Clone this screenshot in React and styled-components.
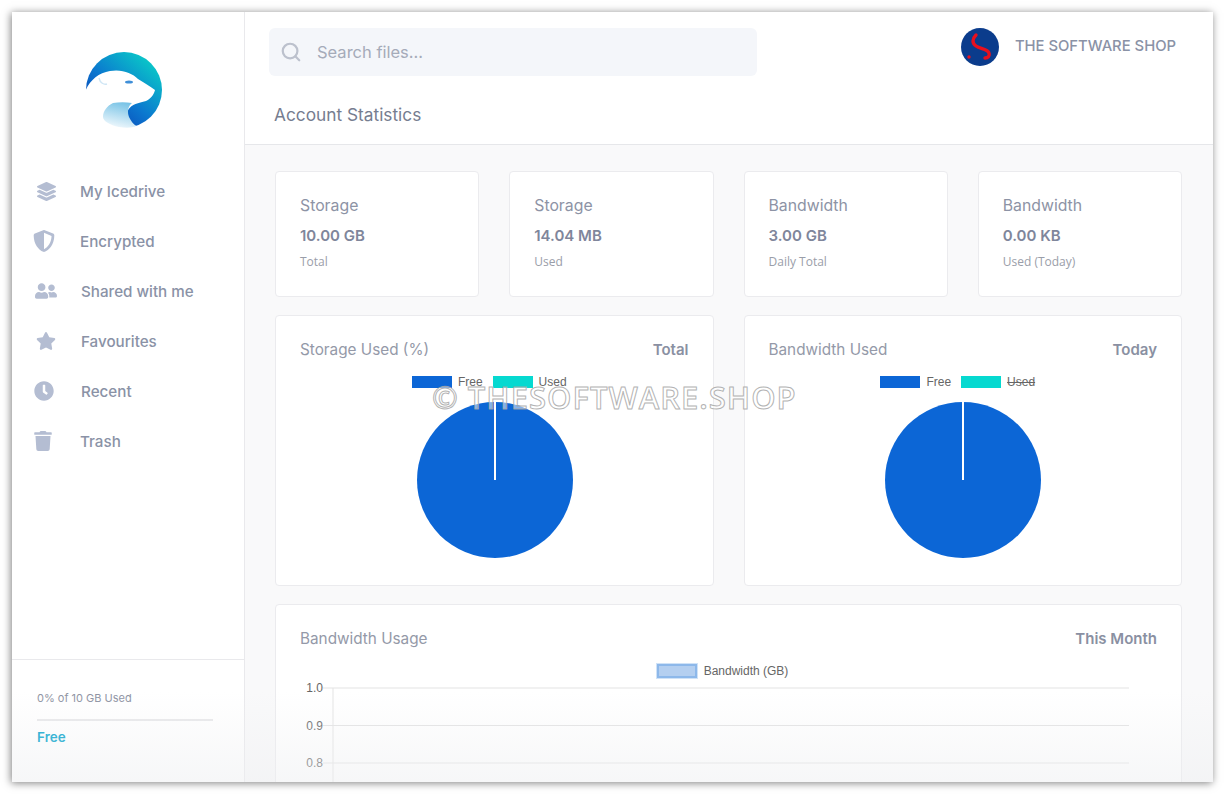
import React from 'react';
import styled, { createGlobalStyle } from 'styled-components';
import { FaLayerGroup, FaShieldAlt, FaUserFriends, FaStar, FaClock, FaTrash } from 'react-icons/fa';
import { Search } from 'lucide-react';

const NAV_ITEMS = [
	{ label: 'My Icedrive', icon: FaLayerGroup, size: 19, iconLeft: 4, textLeft: 0 },
	{ label: 'Encrypted', icon: FaShieldAlt, size: 22, iconLeft: 0, textLeft: 0 },
	{ label: 'Shared with me', icon: FaUserFriends, size: 22, iconLeft: 2, textLeft: 1 },
	{ label: 'Favourites', icon: FaStar, size: 20, iconLeft: 3, textLeft: 1 },
	{ label: 'Recent', icon: FaClock, size: 20, iconLeft: 1, textLeft: 1 },
	{ label: 'Trash', icon: FaTrash, size: 20, iconLeft: 0, textLeft: 0 },
];

const STATS = [
	{ title: 'Storage', value: '10.00 GB', note: 'Total' },
	{ title: 'Storage', value: '14.04 MB', note: 'Used' },
	{ title: 'Bandwidth', value: '3.00 GB', note: 'Daily Total' },
	{ title: 'Bandwidth', value: '0.00 KB', note: 'Used (Today)' },
];

const PIES = [
	{ title: 'Storage Used (%)', period: 'Total', usedHidden: false },
	{ title: 'Bandwidth Used', period: 'Today', usedHidden: true },
];

const TICKS = [
	{ label: '1.0', y: 10 },
	{ label: '0.9', y: 47.5 },
	{ label: '0.8', y: 85 },
];

const Logo = () => (
	<svg width="76" height="76" viewBox="0 0 76 76">
		<defs>
			<linearGradient id="logoBlue" x1="0.15" y1="0.9" x2="0.85" y2="0.1">
				<stop offset="0" stopColor="#0a3fb4" />
				<stop offset="0.45" stopColor="#0b78cf" />
				<stop offset="1" stopColor="#0ac8c8" />
			</linearGradient>
			<linearGradient id="logoPale" x1="0.6" y1="0" x2="0.3" y2="1">
				<stop offset="0" stopColor="#78c3e6" />
				<stop offset="1" stopColor="#f2f9fd" />
			</linearGradient>
		</defs>
		<circle cx="38" cy="38" r="38" fill="url(#logoBlue)" />
		<path
			d="M-1 40C3 29 12 21 24 19C36 17 46 21 52 27C58 31 64 34 69 38C68 43 64 47 60 49C52 51 46 52 42 58C40 64 44 70 50 74L38 80L-2 80Z"
			fill="#fff"
		/>
		<path
			d="M27 51C33 50 40 50 46 51C42 54 41 60 43 65C45 69 47 72 50 74C46 76 40 76 33 75C24 73 17 69 17 65C17 59 21 54 27 51Z"
			fill="url(#logoPale)"
		/>
		<ellipse cx="43" cy="30" rx="4" ry="1.6" fill="#3f8fd8" />
		<path d="M13 26C14 31 18 33 21 32" fill="none" stroke="#cfe6f5" strokeWidth="1.4" />
	</svg>
);

const ShopLogo = () => (
	<svg width="38" height="38" viewBox="0 0 38 38">
		<circle cx="19" cy="19" r="19" fill="#0b3c8c" />
		<path
			d="M15 7C11 11 11 15 15 18C19 21 27 21 28 25C29 28 27 30 24 30"
			fill="none"
			stroke="#e8101e"
			strokeWidth="3.4"
			strokeLinecap="round"
		/>
		<circle cx="8" cy="29" r="1.7" fill="#e8101e" />
	</svg>
);

const Pie = () => (
	<svg width="156" height="156" viewBox="0 0 156 156">
		<circle cx="78" cy="78" r="78" fill="#0c66d6" />
		<line x1="78" y1="0" x2="78" y2="78" stroke="#fff" strokeWidth="2" />
	</svg>
);

const LineChart = () => (
	<ChartSvg width="857" height="170" viewBox="0 0 857 170">
		{TICKS.map(tick => (
			<g key={tick.label}>
				<line x1="23" y1={tick.y} x2="829" y2={tick.y} stroke="#e3e3e3" />
				<text x="23" y={tick.y + 4} textAnchor="end" fontFamily="Liberation Sans, Arial, sans-serif" fontSize="12" fill="#666">
					{tick.label}
				</text>
			</g>
		))}
		<line x1="33" y1="10" x2="33" y2="170" stroke="#e3e3e3" />
	</ChartSvg>
);

const App = () => (
	<Window>
		<GlobalStyle />
		<Sidebar>
			<LogoBlock>
				<Logo />
			</LogoBlock>
			<Nav>
				{NAV_ITEMS.map(item => (
					<NavItem key={item.label}>
						<NavIcon $left={item.iconLeft}>
							<item.icon size={item.size} />
						</NavIcon>
						<NavLabel $shift={item.textLeft}>{item.label}</NavLabel>
					</NavItem>
				))}
			</Nav>
			<SidebarFooter>
				<UsageText>0% of 10 GB Used</UsageText>
				<UsageBar />
				<PlanName>Free</PlanName>
			</SidebarFooter>
		</Sidebar>
		<Main>
			<Header>
				<HeaderTop>
					<SearchBox>
						<Search size={22} color="#bcc1cd" strokeWidth={2.4} />
						<SearchText>Search files...</SearchText>
					</SearchBox>
					<Account>
						<ShopLogo />
						<AccountName>THE SOFTWARE SHOP</AccountName>
					</Account>
				</HeaderTop>
				<PageTitle>Account Statistics</PageTitle>
			</Header>
			<Content>
				<StatGrid>
					{STATS.map(stat => (
						<StatCard key={stat.title + stat.note}>
							<StatTitle>{stat.title}</StatTitle>
							<StatValue>{stat.value}</StatValue>
							<StatNote>{stat.note}</StatNote>
						</StatCard>
					))}
				</StatGrid>
				<PieGrid>
					{PIES.map(pie => (
						<PieCard key={pie.title}>
							<CardHead>
								<CardTitle>{pie.title}</CardTitle>
								<CardPeriod>{pie.period}</CardPeriod>
							</CardHead>
							<Legend>
								<Swatch $color="#0c66d6" />
								<LegendText>Free</LegendText>
								<Swatch $color="#06d9d0" />
								<LegendText $hidden={pie.usedHidden}>Used</LegendText>
							</Legend>
							<PieHolder>
								<Pie />
							</PieHolder>
						</PieCard>
					))}
				</PieGrid>
				<UsageCard>
					<CardHead>
						<CardTitle>Bandwidth Usage</CardTitle>
						<CardPeriod>This Month</CardPeriod>
					</CardHead>
					<BarLegend>
						<BarSwatch />
						<LegendText>Bandwidth (GB)</LegendText>
					</BarLegend>
					<LineChart />
				</UsageCard>
			</Content>
		</Main>
		<BottomFade />
		<Watermark>© THESOFTWARE.SHOP</Watermark>
	</Window>
);

const GlobalStyle = createGlobalStyle`
	html, body {
		margin: 0;
		padding: 0;
		background: #fff;
		overflow: hidden;
	}
	body {
		font-family: Inter, "Noto Sans", sans-serif;
	}
`;

const Window = styled.div`
	position: relative;
	display: flex;
	width: 1201px;
	height: 770px;
	margin: 12px;
	overflow: hidden;
	background: #fff;
	box-shadow: -1px 1px 8px rgba(0, 0, 0, 0.5);
`;

const Sidebar = styled.aside`
	display: flex;
	flex-direction: column;
	flex: 0 0 233px;
	box-sizing: border-box;
	border-right: 1px solid #e9e9ec;
	background: #fff;
`;

const LogoBlock = styled.div`
	display: flex;
	box-sizing: border-box;
	height: 116px;
	padding: 40px 0 0 74px;
`;

const Nav = styled.nav`
	display: flex;
	flex-direction: column;
	margin-top: 38px;
`;

const NavItem = styled.div`
	display: flex;
	align-items: center;
	height: 50px;
	padding-left: 21px;
`;

const NavIcon = styled.span`
	display: flex;
	align-items: center;
	box-sizing: border-box;
	width: 24px;
	height: 24px;
	padding-left: ${props => props.$left}px;
	color: #b4bdd2;
`;

const NavLabel = styled.span`
	margin-left: ${props => 23 + props.$shift}px;
	font-size: 15.2px;
	font-weight: 500;
	color: #8a92a6;
`;

const SidebarFooter = styled.div`
	margin-top: auto;
	height: 123px;
	box-sizing: border-box;
	padding: 31px 31px 0 25px;
	border-top: 1px solid #e9e9ec;
`;

const UsageText = styled.div`
	font-size: 11px;
	line-height: 14px;
	color: #8e93a3;
`;

const UsageBar = styled.div`
	height: 2px;
	margin-top: 14px;
	background: #e8e8ea;
`;

const PlanName = styled.div`
	margin-top: 8px;
	font-size: 13.5px;
	line-height: 17px;
	font-weight: 600;
	color: #00a2cc;
`;

const Main = styled.main`
	display: flex;
	flex-direction: column;
	flex: 1;
	min-width: 0;
`;

const Header = styled.header`
	flex: 0 0 133px;
	box-sizing: border-box;
	padding: 16px 37px 0 24px;
	border-bottom: 1px solid #e6e7ea;
	background: #fff;
`;

const HeaderTop = styled.div`
	display: flex;
	justify-content: space-between;
	align-items: flex-start;
`;

const SearchBox = styled.div`
	display: flex;
	align-items: center;
	width: 488px;
	height: 48px;
	box-sizing: border-box;
	padding-left: 11px;
	border-radius: 6px;
	background: #f4f6fa;
`;

const SearchText = styled.span`
	margin-left: 15px;
	font-size: 16.5px;
	color: #a5abb9;
`;

const Account = styled.div`
	display: flex;
	align-items: center;
	gap: 16px;
`;

const AccountName = styled.span`
	margin-top: -2px;
	font-size: 14.8px;
	font-weight: 500;
	color: #8a92a6;
`;

const PageTitle = styled.h1`
	margin: 0;
	padding: 28px 0 0 5px;
	font-size: 17.3px;
	line-height: 22px;
	font-weight: 400;
	color: #767d90;
`;

const Content = styled.div`
	flex: 1;
	display: flex;
	flex-direction: column;
	gap: 18px;
	min-height: 0;
	padding: 26px 31px 0 30px;
	background: #f9f9fa;
`;

const Card = styled.section`
	box-sizing: border-box;
	border: 1px solid #ebebee;
	border-radius: 4px;
	background: #fff;
`;

const StatGrid = styled.div`
	display: grid;
	grid-template-columns: repeat(4, 1fr);
	gap: 30px;
`;

const StatCard = styled(Card)`
	height: 126px;
	padding: 24px 24px 0;
`;

const StatTitle = styled.div`
	font-size: 15.8px;
	line-height: 20px;
	color: #8d93a5;
`;

const StatValue = styled.div`
	margin-top: 10px;
	font-size: 15px;
	line-height: 20px;
	font-weight: 600;
	color: #7f869b;
`;

const StatNote = styled.div`
	margin-top: 8px;
	font-family: "Open Sans", sans-serif;
	font-size: 12px;
	line-height: 16px;
	color: #9a9ea9;
`;

const PieGrid = styled.div`
	display: grid;
	grid-template-columns: repeat(2, 1fr);
	gap: 30px;
`;

const PieCard = styled(Card)`
	height: 271px;
	padding: 23px 24px 0;
`;

const CardHead = styled.div`
	display: flex;
	justify-content: space-between;
	align-items: center;
	height: 20px;
`;

const CardTitle = styled.div`
	font-size: 15.3px;
	color: #9499a8;
`;

const CardPeriod = styled.div`
	font-size: 15px;
	font-weight: 600;
	color: #8a90a2;
`;

const Legend = styled.div`
	display: flex;
	justify-content: center;
	align-items: center;
	height: 14px;
	margin-top: 16px;
	font-family: "Liberation Sans", Arial, sans-serif;
`;

const Swatch = styled.span`
	width: 40px;
	height: 12px;
	margin-right: 6px;
	background: ${props => props.$color};
`;

const LegendText = styled.span`
	margin-right: 10px;
	font-family: "Liberation Sans", Arial, sans-serif;
	font-size: 12px;
	line-height: 14px;
	color: #666;
	text-decoration: ${props => (props.$hidden ? 'line-through' : 'none')};
`;

const PieHolder = styled.div`
	display: flex;
	justify-content: center;
	margin-top: 13px;
	padding-left: 1px;

	svg {
		display: block;
	}
`;

const UsageCard = styled(Card)`
	height: 220px;
	padding: 23px 24px 0;
`;

const BarLegend = styled(Legend)`
	margin-top: 16px;
	padding-right: 2px;
`;

const BarSwatch = styled.span`
	width: 36px;
	height: 10px;
	margin-right: 7px;
	border: 2px solid #8db8ea;
	background: #b4cff0;
	outline: 1px solid #cfe2f7;
`;

const ChartSvg = styled.svg`
	display: block;
`;

const BottomFade = styled.div`
	position: absolute;
	left: 0;
	right: 0;
	bottom: 0;
	height: 90px;
	background: linear-gradient(rgba(238, 239, 241, 0), rgba(238, 239, 241, 0.5));
	pointer-events: none;
`;

const Watermark = styled.div`
	position: absolute;
	left: 420px;
	top: 366px;
	font-family: "Open Sans", sans-serif;
	font-size: 31px;
	font-weight: 600;
	line-height: 38px;
	letter-spacing: 1px;
	white-space: nowrap;
	color: rgba(255, 255, 255, 0.5);
	-webkit-text-stroke: 1px rgba(165, 165, 165, 0.85);
	pointer-events: none;
`;

export default App;
